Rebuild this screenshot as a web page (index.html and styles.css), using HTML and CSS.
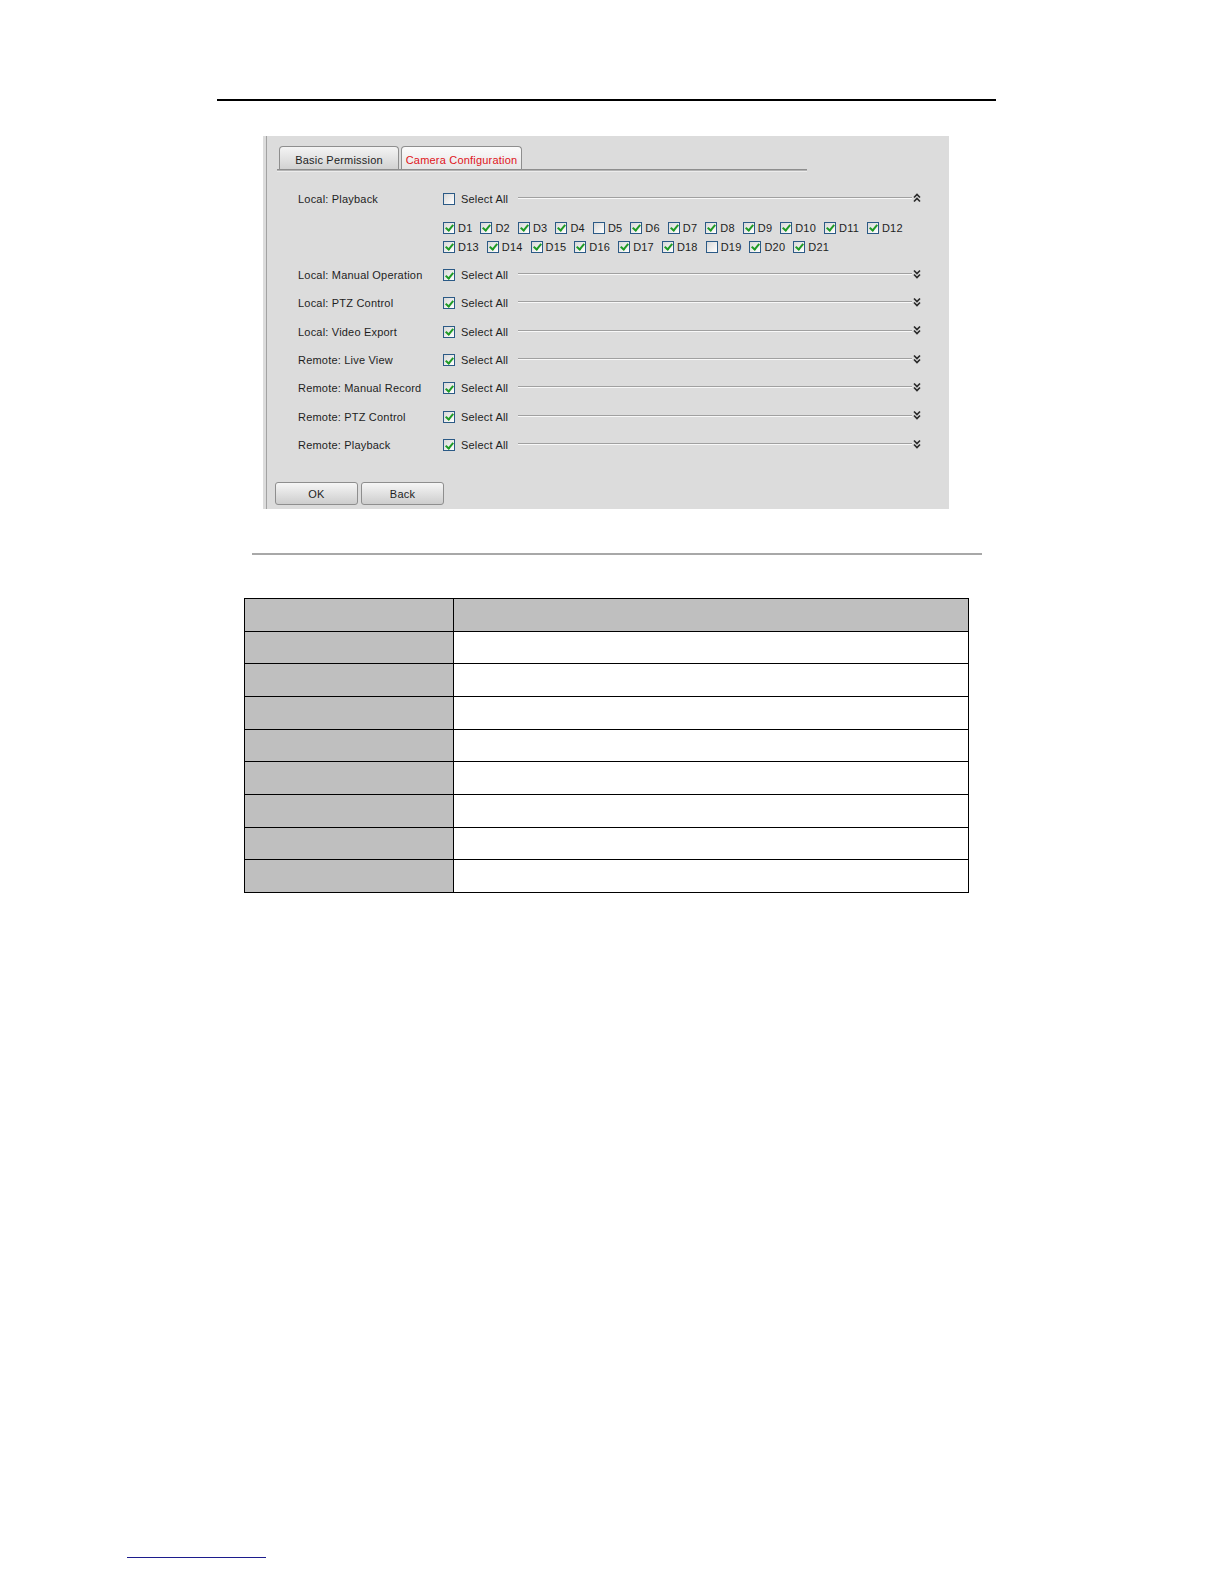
FILE: index.html
```html
<!DOCTYPE html>
<html>
<head>
<meta charset="utf-8">
<link rel="stylesheet" href="styles.css">
</head>
<body>
<div class="rule-top"></div>

<div class="figure">
  <div class="win">
    <div class="tabbar">
      <div class="tab">Basic Permission</div>
      <div class="tab active">Camera Configuration</div>
    </div>

    <div class="perm-list">
      <div class="perm-row">
        <span class="perm-label">Local: Playback</span>
        <span class="sel"><span class="cb"></span>Select All</span>
        <span class="rule"></span>
        <svg class="chev" width="8" height="10" viewBox="0 0 8 10"><path d="M1 4.5 L4 1.5 L7 4.5 M1 8.5 L4 5.5 L7 8.5" fill="none" stroke="#2a2a2a" stroke-width="1.7"/></svg>
      </div>
      <div class="detail">
        <div class="d-line">
          <span class="d"><span class="cb on"></span>D1</span>
          <span class="d"><span class="cb on"></span>D2</span>
          <span class="d"><span class="cb on"></span>D3</span>
          <span class="d"><span class="cb on"></span>D4</span>
          <span class="d"><span class="cb"></span>D5</span>
          <span class="d"><span class="cb on"></span>D6</span>
          <span class="d"><span class="cb on"></span>D7</span>
          <span class="d"><span class="cb on"></span>D8</span>
          <span class="d"><span class="cb on"></span>D9</span>
          <span class="d"><span class="cb on"></span>D10</span>
          <span class="d"><span class="cb on"></span>D11</span>
          <span class="d"><span class="cb on"></span>D12</span>
        </div>
        <div class="d-line">
          <span class="d"><span class="cb on"></span>D13</span>
          <span class="d"><span class="cb on"></span>D14</span>
          <span class="d"><span class="cb on"></span>D15</span>
          <span class="d"><span class="cb on"></span>D16</span>
          <span class="d"><span class="cb on"></span>D17</span>
          <span class="d"><span class="cb on"></span>D18</span>
          <span class="d"><span class="cb"></span>D19</span>
          <span class="d"><span class="cb on"></span>D20</span>
          <span class="d"><span class="cb on"></span>D21</span>
        </div>
      </div>
      <div class="perm-row">
        <span class="perm-label">Local: Manual Operation</span>
        <span class="sel"><span class="cb on"></span>Select All</span>
        <span class="rule"></span>
        <svg class="chev" width="8" height="10" viewBox="0 0 8 10"><path d="M1 1.5 L4 4.5 L7 1.5 M1 5.5 L4 8.5 L7 5.5" fill="none" stroke="#2a2a2a" stroke-width="1.7"/></svg>
      </div>
      <div class="perm-row">
        <span class="perm-label">Local: PTZ Control</span>
        <span class="sel"><span class="cb on"></span>Select All</span>
        <span class="rule"></span>
        <svg class="chev" width="8" height="10" viewBox="0 0 8 10"><path d="M1 1.5 L4 4.5 L7 1.5 M1 5.5 L4 8.5 L7 5.5" fill="none" stroke="#2a2a2a" stroke-width="1.7"/></svg>
      </div>
      <div class="perm-row">
        <span class="perm-label">Local: Video Export</span>
        <span class="sel"><span class="cb on"></span>Select All</span>
        <span class="rule"></span>
        <svg class="chev" width="8" height="10" viewBox="0 0 8 10"><path d="M1 1.5 L4 4.5 L7 1.5 M1 5.5 L4 8.5 L7 5.5" fill="none" stroke="#2a2a2a" stroke-width="1.7"/></svg>
      </div>
      <div class="perm-row">
        <span class="perm-label">Remote: Live View</span>
        <span class="sel"><span class="cb on"></span>Select All</span>
        <span class="rule"></span>
        <svg class="chev" width="8" height="10" viewBox="0 0 8 10"><path d="M1 1.5 L4 4.5 L7 1.5 M1 5.5 L4 8.5 L7 5.5" fill="none" stroke="#2a2a2a" stroke-width="1.7"/></svg>
      </div>
      <div class="perm-row">
        <span class="perm-label">Remote: Manual Record</span>
        <span class="sel"><span class="cb on"></span>Select All</span>
        <span class="rule"></span>
        <svg class="chev" width="8" height="10" viewBox="0 0 8 10"><path d="M1 1.5 L4 4.5 L7 1.5 M1 5.5 L4 8.5 L7 5.5" fill="none" stroke="#2a2a2a" stroke-width="1.7"/></svg>
      </div>
      <div class="perm-row">
        <span class="perm-label">Remote: PTZ Control</span>
        <span class="sel"><span class="cb on"></span>Select All</span>
        <span class="rule"></span>
        <svg class="chev" width="8" height="10" viewBox="0 0 8 10"><path d="M1 1.5 L4 4.5 L7 1.5 M1 5.5 L4 8.5 L7 5.5" fill="none" stroke="#2a2a2a" stroke-width="1.7"/></svg>
      </div>
      <div class="perm-row">
        <span class="perm-label">Remote: Playback</span>
        <span class="sel"><span class="cb on"></span>Select All</span>
        <span class="rule"></span>
        <svg class="chev" width="8" height="10" viewBox="0 0 8 10"><path d="M1 1.5 L4 4.5 L7 1.5 M1 5.5 L4 8.5 L7 5.5" fill="none" stroke="#2a2a2a" stroke-width="1.7"/></svg>
      </div>
    </div>

    <div class="buttons">
      <div class="btn">OK</div>
      <div class="btn">Back</div>
    </div>
  </div>
</div>

<div class="sep"></div>

<table class="grid">
  <tr class="head"><td class="k"></td><td class="v"></td></tr>
  <tr><td class="k"></td><td class="v"></td></tr>
  <tr><td class="k"></td><td class="v"></td></tr>
  <tr><td class="k"></td><td class="v"></td></tr>
  <tr><td class="k"></td><td class="v"></td></tr>
  <tr><td class="k"></td><td class="v"></td></tr>
  <tr><td class="k"></td><td class="v"></td></tr>
  <tr><td class="k"></td><td class="v"></td></tr>
  <tr><td class="k"></td><td class="v"></td></tr>
</table>

<div class="foot-rule"></div>
</body>
</html>
```

FILE: styles.css
```css
html, body {
  margin: 0;
  padding: 0;
  background: #ffffff;
}
body {
  width: 1224px;
  height: 1584px;
  overflow: hidden;
  font-family: "Liberation Sans", Arial, sans-serif;
}

.rule-top {
  margin: 99px 0 0 217px;
  width: 779px;
  height: 2px;
  background: #000;
}

.figure {
  margin: 35px 0 0 263px;
  width: 686px;
  height: 373px;
  background: #dcdcdc;
  padding-left: 3px;
  box-sizing: border-box;
  display: flex;
}
.win {
  flex: 1;
  border-left: 1px solid #a2a2a2;
  display: flex;
  flex-direction: column;
  font-size: 11px;
  letter-spacing: 0.2px;
  color: #1e1e1e;
}

.tabbar {
  margin: 10px 0 0 10px;
  width: 530px;
  display: flex;
  gap: 2px;
  padding-left: 2px;
  box-sizing: border-box;
  border-bottom: 1px solid #8e8e8e;
  box-shadow: 0 1px 0 #b4b4b4, 0 2px 0 #ececec;
}
.tab {
  height: 23px;
  box-sizing: border-box;
  border: 1px solid #8e8e8e;
  border-bottom: none;
  border-radius: 4px 4px 0 0;
  background: linear-gradient(#f4f4f4, #d2d2d2);
  display: flex;
  align-items: center;
  justify-content: center;
  width: 120px;
  padding-top: 3px;
}
.tab.active {
  width: 121px;
  background: linear-gradient(#fbfbfb, #e6e6e6);
  color: #e0141b;
}

.perm-list {
  margin: 15px 0 0 31px;
  width: 623px;
}
.perm-row {
  height: 28.33px;
  display: flex;
  align-items: center;
}
.perm-list > .perm-row:first-child {
  height: 28px;
}
.perm-label {
  width: 145px;
  flex: none;
}
.sel {
  display: flex;
  align-items: center;
  flex: none;
}
.sel .cb {
  margin-right: 6px;
}
.rule {
  flex: 1;
  margin-left: 10px;
  height: 0;
  border-top: 1px solid #a0a0a0;
  border-bottom: 1px solid #f8f8f8;
  margin-top: -2px;
}
.chev {
  flex: none;
  margin-left: 1px;
  margin-top: -3px;
}

.cb {
  display: inline-block;
  position: relative;
  width: 12px;
  height: 12px;
  box-sizing: border-box;
  border: 1px solid #2b5a86;
  background: linear-gradient(135deg, #d8d8d8, #ffffff);
  flex: none;
}
.cb.on::after {
  content: "";
  position: absolute;
  left: 3px;
  top: 0.5px;
  width: 3px;
  height: 6px;
  border-right: 2px solid #1f9b26;
  border-bottom: 2px solid #1f9b26;
  transform: rotate(40deg);
}

.detail {
  padding: 5px 0 5px 145px;
}
.d-line {
  height: 19px;
  display: flex;
  align-items: center;
  gap: 8px;
}
.d {
  display: flex;
  align-items: center;
}
.d .cb {
  margin-right: 3px;
}

.buttons {
  margin: 23px 0 0 8px;
  display: flex;
  gap: 3px;
}
.btn {
  width: 83px;
  height: 23px;
  box-sizing: border-box;
  border: 1px solid #8e8e8e;
  border-radius: 3px;
  background: linear-gradient(#f6f6f6, #cdcdcd);
  display: flex;
  align-items: center;
  justify-content: center;
}

.sep {
  margin: 44px 0 0 252px;
  width: 730px;
  height: 2px;
  background: #a8a8a8;
}

.grid {
  margin: 43px 0 0 244px;
  width: 725px;
  border-collapse: collapse;
}
.grid td {
  height: 32.67px;
  padding: 0;
  border: 1.5px solid #000;
  box-sizing: border-box;
}
.grid td.k {
  width: 209px;
  background: #bfbfbf;
}
.grid tr.head td {
  background: #bfbfbf;
}
.grid td.v {
  background: #fff;
}

.foot-rule {
  margin: 664px 0 0 127px;
  width: 139px;
  height: 1.5px;
  background: #1c1c8c;
}
```
